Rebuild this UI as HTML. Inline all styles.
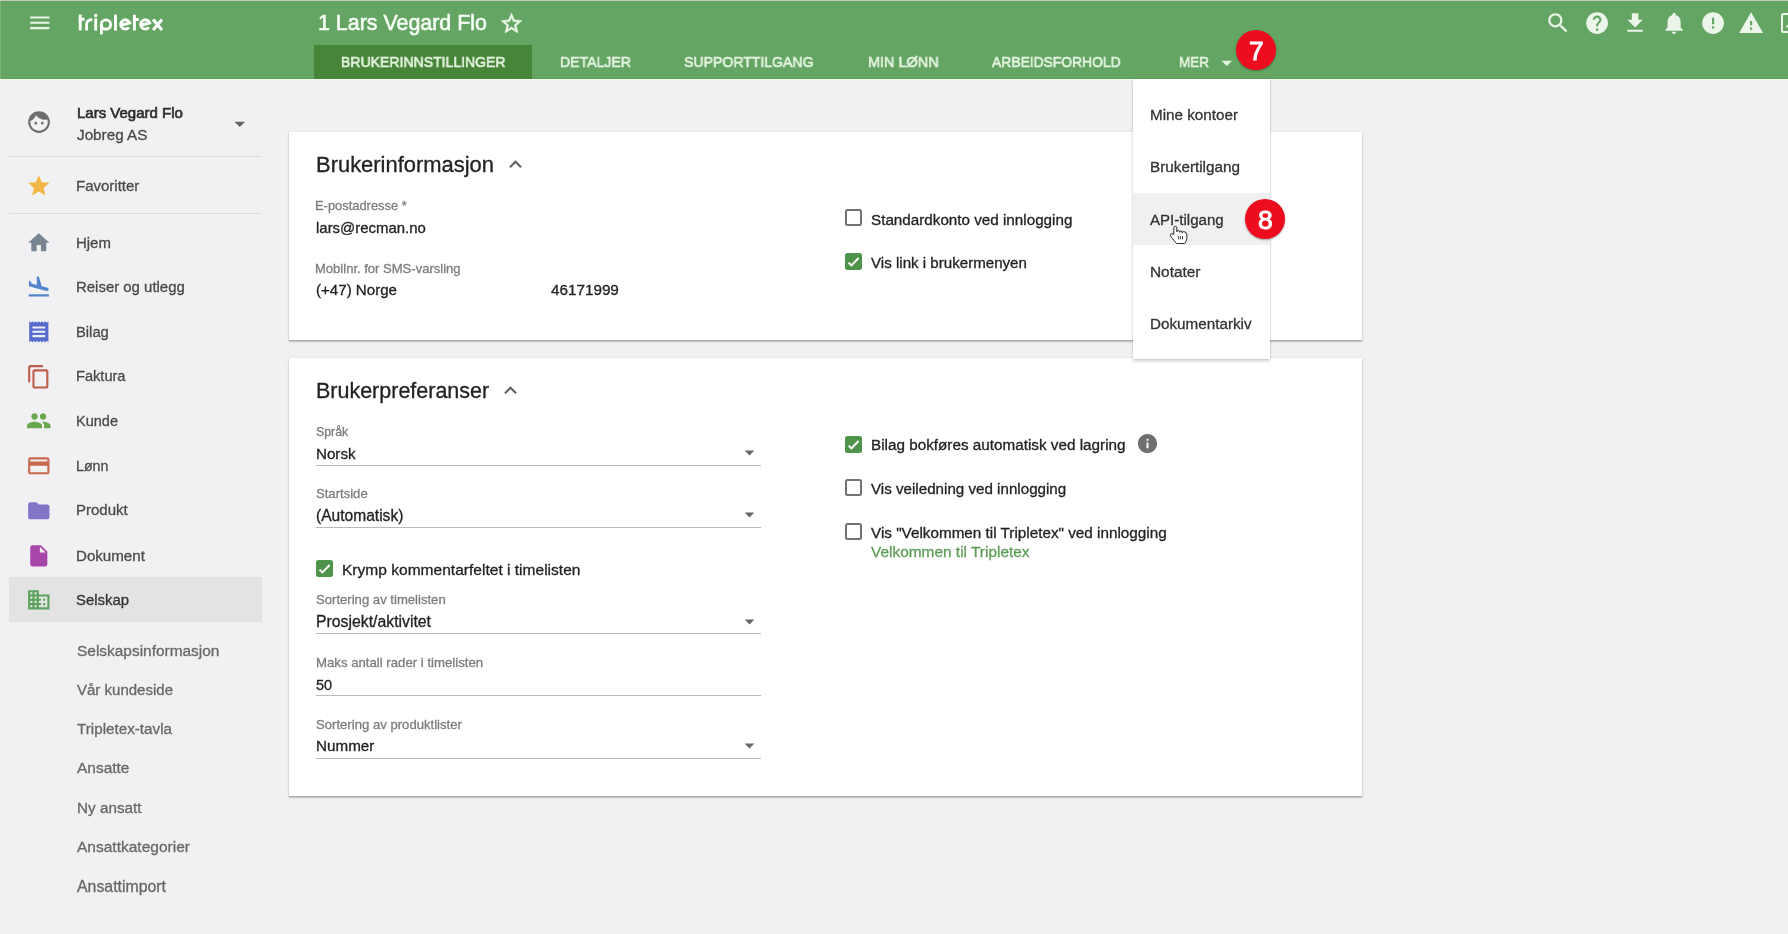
<!DOCTYPE html><html><head><meta charset="utf-8"><style>
html,body{margin:0;padding:0;}
body{width:1788px;height:934px;overflow:hidden;position:relative;background:#f1f1f3;font-family:"Liberation Sans",sans-serif;}
.t{position:absolute;white-space:nowrap;line-height:1;-webkit-text-stroke:0.3px currentColor;will-change:transform;}
.abs{position:absolute;}
.cb{position:absolute;width:17px;height:17px;box-sizing:border-box;border:2px solid #727272;border-radius:2.5px;}
.cbc{position:absolute;width:17px;height:17px;box-sizing:border-box;border-radius:2.5px;background:#4d944a;}
</style></head><body>
<div class="abs" style="left:0;top:0;width:1788px;height:79px;background:#65a563;"></div>
<div class="abs" style="left:0;top:78px;width:1788px;height:1px;background:#619f5e;"></div>
<div class="abs" style="left:0;top:79px;width:1788px;height:1px;background:#f3f7f2;"></div>
<div class="abs" style="left:0;top:0;width:1px;height:79px;background:#78b075;"></div>
<div class="abs" style="left:0;top:0;width:1788px;height:1px;background:#c5cac3;"></div>
<svg style="position:absolute;left:26.5px;top:10px;" width="25.6" height="25.6" viewBox="0 0 24 24"><path fill="#ecf5ea" d="M3 18h18v-2H3v2zm0-5h18v-2H3v2zm0-7v2h18V6H3z"/></svg>
<svg class="abs" style="left:0;top:0" width="200" height="45" viewBox="0 0 200 45" fill="none" stroke="#fdfffc" stroke-width="2.9">
<path d="M80.2 14.6V30.6M78.6 19.3H84.5"/>
<path d="M86.6 30.6V24.4A4.6 4.6 0 0 1 91.2 19.8H92.2"/>
<path d="M95.7 18.4V30.6"/><circle cx="95.7" cy="15.5" r="1.75" fill="#fdfffc" stroke="none"/>
<path d="M101.4 24.5V34.4"/><circle cx="105.95" cy="24.6" r="4.7"/>
<path d="M115.5 14.6V30.6"/>
<path d="M120.5 25.4L129.7 22.9A4.65 4.65 0 1 0 128.9 27.4"/>
<path d="M134.4 14.8V30.6M132.8 19.5H138.8"/>
<path d="M140.5 25.4L149.7 22.9A4.65 4.65 0 1 0 148.9 27.4"/>
<path d="M153.1 19.4L162 30M162 19.4L153.1 30" stroke-width="3.1"/>
</svg>
<div class="t" style="left:317.5px;top:13px;font-size:21.4px;color:#f7fcf6;font-weight:400;-webkit-text-stroke:0.6px #f7fcf6;transform:scaleX(0.9981);transform-origin:0 0;">1 Lars Vegard Flo</div>
<svg style="position:absolute;left:498.9px;top:10.9px" width="25" height="25" viewBox="0 0 24 24"><path fill="#ecf7e9" stroke="#ecf7e9" stroke-width="0.55" stroke-linejoin="round" d="M22 9.24l-7.19-.62L12 2 9.19 8.63 2 9.24l5.46 4.73L5.82 21 12 17.27 18.18 21l-1.63-7.03L22 9.24zM12 15.4l-3.76 2.27 1-4.28-3.32-2.88 4.38-.38L12 6.1l1.71 4.04 4.38.38-3.32 2.88 1 4.28L12 15.4z"/></svg>
<div class="abs" style="left:314px;top:45px;width:218px;height:34px;background:#478638;"></div>
<div class="t" style="left:341px;top:54px;font-size:15.4px;color:#e4f3e0;font-weight:400;-webkit-text-stroke:0.65px #e4f3e0;transform:scaleX(0.9121);transform-origin:0 0;">BRUKERINNSTILLINGER</div>
<div class="t" style="left:559.6px;top:54px;font-size:15.4px;color:#e4f3e0;font-weight:400;-webkit-text-stroke:0.65px #e4f3e0;transform:scaleX(0.9138);transform-origin:0 0;">DETALJER</div>
<div class="t" style="left:684.2px;top:54px;font-size:15.4px;color:#e4f3e0;font-weight:400;-webkit-text-stroke:0.65px #e4f3e0;transform:scaleX(0.9142);transform-origin:0 0;">SUPPORTTILGANG</div>
<div class="t" style="left:867.7px;top:54px;font-size:15.4px;color:#e4f3e0;font-weight:400;-webkit-text-stroke:0.65px #e4f3e0;transform:scaleX(0.9390);transform-origin:0 0;">MIN LØNN</div>
<div class="t" style="left:992.3px;top:54px;font-size:15.4px;color:#e4f3e0;font-weight:400;-webkit-text-stroke:0.65px #e4f3e0;transform:scaleX(0.8999);transform-origin:0 0;">ARBEIDSFORHOLD</div>
<div class="t" style="left:1178.7px;top:54px;font-size:15.4px;color:#e4f3e0;font-weight:400;-webkit-text-stroke:0.65px #e4f3e0;transform:scaleX(0.8766);transform-origin:0 0;">MER</div>
<svg style="position:absolute;left:1213.6px;top:49.7px;" width="25.6" height="25.6" viewBox="0 0 24 24"><path fill="#e4f3e0" d="M7 10l5 5 5-5z"/></svg>
<svg style="position:absolute;left:1545.1px;top:9.7px;" width="26.2" height="26.2" viewBox="0 0 24 24"><path fill="#ecf5ea" d="M15.5 14h-.79l-.28-.27C15.41 12.59 16 11.11 16 9.5 16 5.91 13.09 3 9.5 3S3 5.91 3 9.5 5.91 16 9.5 16c1.61 0 3.09-.59 4.23-1.57l.27.28v.79l5 4.99L20.49 19l-4.99-5zm-6 0C7.01 14 5 11.990 5 9.5S7.01 5 9.5 5 14 7.01 14 9.5 11.99 14 9.5 14z"/></svg>
<svg style="position:absolute;left:1583.8px;top:9.7px;" width="26.2" height="26.2" viewBox="0 0 24 24"><path fill="#ecf5ea" d="M12 2C6.48 2 2 6.48 2 12s4.48 10 10 10 10-4.48 10-10S17.52 2 12 2zm1 17h-2v-2h2v2zm2.070-7.75l-.9.92C13.45 12.9 13 13.5 13 15h-2v-.5c0-1.1.45-2.1 1.17-2.83l1.24-1.26c.37-.36.59-.86.59-1.41 0-1.1-.9-2-2-2s-2 .9-2 2H8c0-2.21 1.79-4 4-4s4 1.79 4 4c0 .88-.36 1.68-.93 2.25z"/></svg>
<svg style="position:absolute;left:1622.4px;top:9.7px;" width="26.2" height="26.2" viewBox="0 0 24 24"><path fill="#ecf5ea" d="M19 9h-4V3H9v6H5l7 7 7-7zM5 18v2h14v-2H5z"/></svg>
<svg style="position:absolute;left:1661.0px;top:9.7px;" width="26.2" height="26.2" viewBox="0 0 24 24"><path fill="#ecf5ea" d="M12 22c1.1 0 2-.9 2-2h-4c0 1.1.89 2 2 2zm6-6v-5c0-3.07-1.64-5.64-4.5-6.32V4c0-.83-.67-1.5-1.5-1.5s-1.5.67-1.5 1.5v.68C7.63 5.36 6 7.92 6 11v5l-2 2v1h16v-1l-2-2z"/></svg>
<svg style="position:absolute;left:1699.7px;top:9.7px;" width="26.2" height="26.2" viewBox="0 0 24 24"><path fill="#ecf5ea" d="M12 2C6.48 2 2 6.48 2 12s4.48 10 10 10 10-4.48 10-10S17.52 2 12 2zm1 15h-2v-2h2v2zm0-4h-2V7h2v6z"/></svg>
<svg style="position:absolute;left:1738.3px;top:9.7px;" width="26.2" height="26.2" viewBox="0 0 24 24"><path fill="#ecf5ea" d="M1 21h22L12 2 1 21zm12-3h-2v-2h2v2zm0-4h-2v-4h2v4z"/></svg>
<div class="abs" style="left:1780.5px;top:13px;width:14px;height:16px;border:2px solid #ecf5ea;border-radius:2.5px;"></div>
<svg class="abs" style="left:1780px;top:20px" width="8" height="10"><path d="M5.2 7.2L8 4.2V7.2Z" fill="#ecf5ea"/></svg>
<svg style="position:absolute;left:26.2px;top:108.7px;" width="26.1" height="26.1" viewBox="0 0 24 24"><path fill="#6e6e6e" d="M9 11.75c-.69 0-1.25.56-1.25 1.25s.56 1.25 1.25 1.25 1.25-.56 1.25-1.25-.56-1.25-1.25-1.25zm6 0c-.69 0-1.25.56-1.25 1.25s.56 1.25 1.25 1.25 1.25-.56 1.25-1.25-.56-1.25-1.25-1.25zM12 2C6.48 2 2 6.48 2 12s4.48 10 10 10 10-4.48 10-10S17.52 2 12 2zm0 18c-4.41 0-8-3.59-8-8 0-.29.02-.58.05-.86 2.36-1.05 4.23-2.98 5.21-5.37C11.07 8.33 14.05 10 17.42 10c.78 0 1.53-.09 2.25-.26.21.71.33 1.47.33 2.26 0 4.41-3.59 8-8 8z"/></svg>
<div class="t" style="left:77px;top:105px;font-size:15px;color:#2e2e2e;font-weight:400;-webkit-text-stroke:0.65px #2e2e2e;transform:scaleX(0.9953);transform-origin:0 0;">Lars Vegard Flo</div>
<div class="t" style="left:76.5px;top:127px;font-size:15.28px;color:#4a4a4a;font-weight:400;">Jobreg AS</div>
<svg style="position:absolute;left:226.9px;top:110.7px;" width="25.6" height="25.6" viewBox="0 0 24 24"><path fill="#666" d="M7 10l5 5 5-5z"/></svg>
<div class="abs" style="left:9px;top:156px;width:253px;height:1px;background:#dcdcde;"></div>
<svg style="position:absolute;left:26.2px;top:172.6px;" width="25.6" height="25.6" viewBox="0 0 24 24"><path fill="#f1b644" d="M12 17.27L18.18 21l-1.64-7.03L22 9.240l-7.19-.61L12 2 9.19 8.63 2 9.24l5.46 4.73L5.82 21z"/></svg>
<div class="t" style="left:76.4px;top:178px;font-size:15.01px;color:#4a4a4a;font-weight:400;">Favoritter</div>
<div class="abs" style="left:9px;top:213px;width:253px;height:1px;background:#dcdcde;"></div>
<div class="abs" style="left:9px;top:577px;width:253px;height:45px;background:#e3e3e4;"></div>
<svg style="position:absolute;left:26.1px;top:229.5px;" width="25.6" height="25.6" viewBox="0 0 24 24"><path fill="#7a8594" d="M10 20v-6h4v6h5v-8h3L12 3 2 12h3v8z"/></svg>
<div class="t" style="left:76.4px;top:236px;font-size:14.96px;color:#4a4a4a;font-weight:400;">Hjem</div>
<svg style="position:absolute;left:26.1px;top:274.4px;" width="25.6" height="25.6" viewBox="0 0 24 24"><path fill="#5385cd" d="M2.5 19h19v2h-19zm7.18-5.73l4.35 1.16 5.31 1.42c.8.21 1.62-.26 1.84-1.06.21-.8-.26-1.62-1.06-1.84l-5.31-1.42-2.76-9.02L10.12 2v8.28L5.15 8.95l-.93-2.32-1.45-.39v5.17l1.6.43 5.31 1.43z"/></svg>
<div class="t" style="left:76.4px;top:280px;font-size:14.94px;color:#4a4a4a;font-weight:400;">Reiser og utlegg</div>
<svg style="position:absolute;left:26.1px;top:319.4px;" width="25.6" height="25.6" viewBox="0 0 24 24"><path fill="#566bcd" d="M18 17H6v-2h12v2zm0-4H6v-2h12v2zm0-4H6V7h12v2zM3 22l1.5-1.5L6 22l1.5-1.5L9 22l1.5-1.5L12 22l1.5-1.5L15 22l1.5-1.5L18 22l1.5-1.5L21 22V2l-1.5 1.5L18 2l-1.5 1.5L15 2l-1.5 1.5L12 2l-1.5 1.5L9 2 7.5 3.5 6 2 4.5 3.5 3 2v20z"/></svg>
<div class="t" style="left:76.4px;top:325px;font-size:14.75px;color:#4a4a4a;font-weight:400;">Bilag</div>
<svg style="position:absolute;left:26.1px;top:363.6px;" width="25.6" height="25.6" viewBox="0 0 24 24"><path fill="#bd5f4b" d="M16 1H4c-1.1 0-2 .9-2 2v14h2V3h12V1zm3 4H8c-1.1 0-2 .9-2 2v14c0 1.1.9 2 2 2h11c1.1 0 2-.9 2-2V7c0-1.1-.9-2-2-2zm0 16H8V7h11v14z"/></svg>
<div class="t" style="left:76.4px;top:369px;font-size:14.6px;color:#4a4a4a;font-weight:400;">Faktura</div>
<svg style="position:absolute;left:26.1px;top:408px;" width="25.6" height="25.6" viewBox="0 0 24 24"><path fill="#69a74f" d="M16 11c1.66 0 2.99-1.34 2.99-3S17.66 5 16 5c-1.66 0-3 1.34-3 3s1.34 3 3 3zm-8 0c1.66 0 2.99-1.34 2.99-3S9.66 5 8 5C6.34 5 5 6.34 5 8s1.34 3 3 3zm0 2c-2.33 0-7 1.17-7 3.5V19h14v-2.5c0-2.33-4.67-3.5-7-3.5zm8 0c-.29 0-.62.02-.97.05 1.16.84 1.97 1.97 1.97 3.45V19h6v-2.5c0-2.33-4.67-3.5-7-3.5z"/></svg>
<div class="t" style="left:76.4px;top:414px;font-size:14.53px;color:#4a4a4a;font-weight:400;">Kunde</div>
<svg style="position:absolute;left:26.1px;top:452.9px;" width="25.6" height="25.6" viewBox="0 0 24 24"><path fill="#c96a4e" d="M20 4H4c-1.11 0-1.99.89-1.99 2L2 18c0 1.11.89 2 2 2h16c1.11 0 2-.89 2-2V6c0-1.11-.89-2-2-2zm0 14H4v-6h16v6zm0-10H4V6h16v2z"/></svg>
<div class="t" style="left:76.4px;top:459px;font-size:14.22px;color:#4a4a4a;font-weight:400;">Lønn</div>
<svg style="position:absolute;left:26.1px;top:497.7px;" width="25.6" height="25.6" viewBox="0 0 24 24"><path fill="#8274c7" d="M10 4H4c-1.1 0-1.99.9-1.99 2L2 18c0 1.1.9 2 2 2h16c1.1 0 2-.9 2-2V8c0-1.1-.9-2-2-2h-8l-2-2z"/></svg>
<div class="t" style="left:76.4px;top:502px;font-size:15.03px;color:#4a4a4a;font-weight:400;">Produkt</div>
<svg style="position:absolute;left:26.1px;top:542.9px;" width="25.6" height="25.6" viewBox="0 0 24 24"><path fill="#a845a9" d="M6 2c-1.1 0-1.99.9-1.99 2L4 20c0 1.1.89 2 1.99 2H18c1.1 0 2-.9 2-2V8l-6-6H6zm7 7V3.5L18.5 9H13z"/></svg>
<div class="t" style="left:76.4px;top:548px;font-size:15.12px;color:#4a4a4a;font-weight:400;">Dokument</div>
<svg style="position:absolute;left:26.1px;top:587.3px;" width="25.6" height="25.6" viewBox="0 0 24 24"><path fill="#5aa25a" d="M12 7V3H2v18h20V7H12zM6 19H4v-2h2v2zm0-4H4v-2h2v2zm0-4H4V9h2v2zm0-4H4V5h2v2zm4 12H8v-2h2v2zm0-4H8v-2h2v2zm0-4H8V9h2v2zm0-4H8V5h2v2zm10 12h-8v-2h2v-2h-2v-2h2v-2h-2V9h8v10zm-2-8h-2v2h2v-2zm0 4h-2v2h2v-2z"/></svg>
<div class="t" style="left:76.4px;top:593px;font-size:14.9px;color:#333;font-weight:400;">Selskap</div>
<div class="t" style="left:76.5px;top:643px;font-size:15.45px;color:#686868;font-weight:400;">Selskapsinformasjon</div>
<div class="t" style="left:76.5px;top:682px;font-size:15.02px;color:#686868;font-weight:400;">Vår kundeside</div>
<div class="t" style="left:76.5px;top:721px;font-size:15.23px;color:#686868;font-weight:400;">Tripletex-tavla</div>
<div class="t" style="left:76.5px;top:760px;font-size:15.48px;color:#686868;font-weight:400;">Ansatte</div>
<div class="t" style="left:76.5px;top:800px;font-size:15.27px;color:#686868;font-weight:400;">Ny ansatt</div>
<div class="t" style="left:76.5px;top:839px;font-size:15.53px;color:#686868;font-weight:400;">Ansattkategorier</div>
<div class="t" style="left:76.5px;top:879px;font-size:15.87px;color:#686868;font-weight:400;">Ansattimport</div>
<div class="abs" style="left:289px;top:132px;width:1073px;height:208px;background:#fff;box-shadow:0 1px 1px rgba(0,0,0,0.16), 0 2px 1px rgba(0,0,0,0.1), 0 2px 4px rgba(0,0,0,0.07), 0 0 1px rgba(0,0,0,0.15);"></div>
<div class="abs" style="left:289px;top:358px;width:1073px;height:438px;background:#fff;box-shadow:0 1px 1px rgba(0,0,0,0.16), 0 2px 1px rgba(0,0,0,0.1), 0 2px 4px rgba(0,0,0,0.07), 0 0 1px rgba(0,0,0,0.15);"></div>
<div class="t" style="left:316.2px;top:154px;font-size:21.95px;color:#222;font-weight:400;">Brukerinformasjon</div>
<svg style="position:absolute;left:503.4px;top:151.6px;" width="25" height="25" viewBox="0 0 24 24"><path fill="#5f5f5f" d="M12 8l-6 6 1.41 1.41L12 10.83l4.59 4.58L18 14z"/></svg>
<div class="t" style="left:314.8px;top:200px;font-size:12.9px;color:#7d7d7d;font-weight:400;">E-postadresse *</div>
<div class="t" style="left:316.2px;top:221px;font-size:14.94px;color:#222;font-weight:400;">lars@recman.no</div>
<div class="t" style="left:314.8px;top:262px;font-size:13.04px;color:#7d7d7d;font-weight:400;">Mobilnr. for SMS-varsling</div>
<div class="t" style="left:315.6px;top:282px;font-size:15.1px;color:#222;font-weight:400;">(+47) Norge</div>
<div class="t" style="left:550.6px;top:282px;font-size:15.26px;color:#222;font-weight:400;">46171999</div>
<div class="cb" style="left:845px;top:209px;"></div>
<div class="t" style="left:871px;top:212px;font-size:15.23px;color:#222;font-weight:400;">Standardkonto ved innlogging</div>
<div class="cbc" style="left:845px;top:253px;"></div>
<svg class="abs" style="left:845px;top:253px" width="17" height="17" viewBox="0 0 17 17"><path d="M3.6 9.6L6.4 12.4L13.6 5" fill="none" stroke="#fff" stroke-width="2"/></svg>
<div class="t" style="left:871px;top:255px;font-size:15.12px;color:#222;font-weight:400;">Vis link i brukermenyen</div>
<div class="t" style="left:316.1px;top:381px;font-size:21.49px;color:#222;font-weight:400;">Brukerpreferanser</div>
<svg style="position:absolute;left:498.4px;top:377.6px;" width="25" height="25" viewBox="0 0 24 24"><path fill="#5f5f5f" d="M12 8l-6 6 1.41 1.41L12 10.83l4.59 4.58L18 14z"/></svg>
<div class="t" style="left:316px;top:426px;font-size:12.37px;color:#7d7d7d;font-weight:400;">Språk</div>
<div class="t" style="left:316px;top:446px;font-size:15.17px;color:#222;font-weight:400;">Norsk</div>
<div class="abs" style="left:316px;top:465px;width:445px;height:1px;background:#bababa;"></div>
<svg style="position:absolute;left:737.6px;top:440.9px;" width="23" height="23" viewBox="0 0 24 24"><path fill="#666" d="M7 10l5 5 5-5z"/></svg>
<div class="t" style="left:316px;top:487px;font-size:13.1px;color:#7d7d7d;font-weight:400;">Startside</div>
<div class="t" style="left:316px;top:508px;font-size:15.57px;color:#222;font-weight:400;">(Automatisk)</div>
<div class="abs" style="left:316px;top:527px;width:445px;height:1px;background:#bababa;"></div>
<svg style="position:absolute;left:737.6px;top:503.4px;" width="23" height="23" viewBox="0 0 24 24"><path fill="#666" d="M7 10l5 5 5-5z"/></svg>
<div class="t" style="left:316px;top:593px;font-size:13.12px;color:#7d7d7d;font-weight:400;">Sortering av timelisten</div>
<div class="t" style="left:316px;top:614px;font-size:15.8px;color:#222;font-weight:400;">Prosjekt/aktivitet</div>
<div class="abs" style="left:316px;top:633px;width:445px;height:1px;background:#bababa;"></div>
<svg style="position:absolute;left:737.6px;top:609.6px;" width="23" height="23" viewBox="0 0 24 24"><path fill="#666" d="M7 10l5 5 5-5z"/></svg>
<div class="t" style="left:316px;top:656px;font-size:13.19px;color:#7d7d7d;font-weight:400;">Maks antall rader i timelisten</div>
<div class="t" style="left:316px;top:678px;font-size:14.57px;color:#222;font-weight:400;">50</div>
<div class="abs" style="left:316px;top:695px;width:445px;height:1px;background:#bababa;"></div>
<div class="t" style="left:316px;top:718px;font-size:13.13px;color:#7d7d7d;font-weight:400;">Sortering av produktlister</div>
<div class="t" style="left:316px;top:738px;font-size:15.23px;color:#222;font-weight:400;">Nummer</div>
<div class="abs" style="left:316px;top:758px;width:445px;height:1px;background:#bababa;"></div>
<svg style="position:absolute;left:737.6px;top:733.6px;" width="23" height="23" viewBox="0 0 24 24"><path fill="#666" d="M7 10l5 5 5-5z"/></svg>
<div class="cbc" style="left:315.5px;top:560px;"></div>
<svg class="abs" style="left:315.5px;top:560px" width="17" height="17" viewBox="0 0 17 17"><path d="M3.6 9.6L6.4 12.4L13.6 5" fill="none" stroke="#fff" stroke-width="2"/></svg>
<div class="t" style="left:342.4px;top:562px;font-size:15.56px;color:#222;font-weight:400;">Krymp kommentarfeltet i timelisten</div>
<div class="cbc" style="left:845px;top:435.5px;"></div>
<svg class="abs" style="left:845px;top:435.5px" width="17" height="17" viewBox="0 0 17 17"><path d="M3.6 9.6L6.4 12.4L13.6 5" fill="none" stroke="#fff" stroke-width="2"/></svg>
<div class="t" style="left:871.2px;top:437px;font-size:15.28px;color:#222;font-weight:400;">Bilag bokføres automatisk ved lagring</div>
<svg style="position:absolute;left:1135.7px;top:432.4px;" width="23" height="23" viewBox="0 0 24 24"><path fill="#6f6f6f" d="M12 2C6.48 2 2 6.48 2 12s4.48 10 10 10 10-4.48 10-10S17.52 2 12 2zm1 15h-2v-6h2v6zm0-8h-2V7h2v2z"/></svg>
<div class="cb" style="left:845px;top:479px;"></div>
<div class="t" style="left:871.2px;top:481px;font-size:15.16px;color:#222;font-weight:400;">Vis veiledning ved innlogging</div>
<div class="cb" style="left:845px;top:523px;"></div>
<div class="t" style="left:871.2px;top:525px;font-size:15.28px;color:#222;font-weight:400;">Vis "Velkommen til Tripletex" ved innlogging</div>
<div class="t" style="left:871.2px;top:544px;font-size:15.43px;color:#5c9d55;font-weight:400;">Velkommen til Tripletex</div>
<div class="abs" style="left:1133px;top:79px;width:137px;height:280px;background:#fff;box-shadow:0 2px 3px rgba(0,0,0,0.2), 0 0 1px rgba(0,0,0,0.15);"></div>
<div class="abs" style="left:1133px;top:193px;width:137px;height:52px;background:#f0f0f1;"></div>
<div class="t" style="left:1149.8px;top:107px;font-size:15.24px;color:#333;font-weight:400;">Mine kontoer</div>
<div class="t" style="left:1149.8px;top:159px;font-size:15.28px;color:#333;font-weight:400;">Brukertilgang</div>
<div class="t" style="left:1149.8px;top:212px;font-size:15.07px;color:#333;font-weight:400;">API-tilgang</div>
<div class="t" style="left:1149.8px;top:264px;font-size:15.4px;color:#333;font-weight:400;">Notater</div>
<div class="t" style="left:1149.8px;top:316px;font-size:15.24px;color:#333;font-weight:400;">Dokumentarkiv</div>
<svg class="abs" style="left:1168px;top:224px" width="22" height="22" viewBox="0 0 22 22">
<path d="M5.8 10.5V3.8Q5.8 2.3 7.3 2.3Q8.8 2.3 8.8 3.8V7.8Q8.8 6.5 10.15 6.5Q11.5 6.5 11.5 7.8V8.3Q11.5 7 12.85 7Q14.2 7 14.2 8.3V8.9Q14.2 7.6 15.6 7.6Q18.8 7.6 18.8 11V14.5Q18.8 16 17.6 18L16.6 19.5H8.5L3.3 13.2Q1.8 11.3 2.6 10.2Q3.6 8.9 5.8 10.5Z" fill="#fff" stroke="#222" stroke-width="0.95" stroke-linejoin="round"/>
<path d="M10.4 12V15.4M12.4 12V15.4M14.5 12V15.4" stroke="#333" stroke-width="0.9"/>
</svg>
<div class="abs" style="left:1236px;top:30px;width:40px;height:40px;border-radius:50%;background:#ee0c1f;box-shadow:0 1px 2px rgba(0,0,0,0.35);"></div>
<div class="t" style="left:1248.7px;top:38px;font-size:26.5px;color:#fff;font-weight:400;-webkit-text-stroke:1px #fff;">7</div>
<div class="abs" style="left:1245px;top:199px;width:40px;height:40px;border-radius:50%;background:#ee0c1f;box-shadow:0 1px 2px rgba(0,0,0,0.35);"></div>
<div class="t" style="left:1257.7px;top:207px;font-size:26.5px;color:#fff;font-weight:400;-webkit-text-stroke:1px #fff;">8</div>
</body></html>
